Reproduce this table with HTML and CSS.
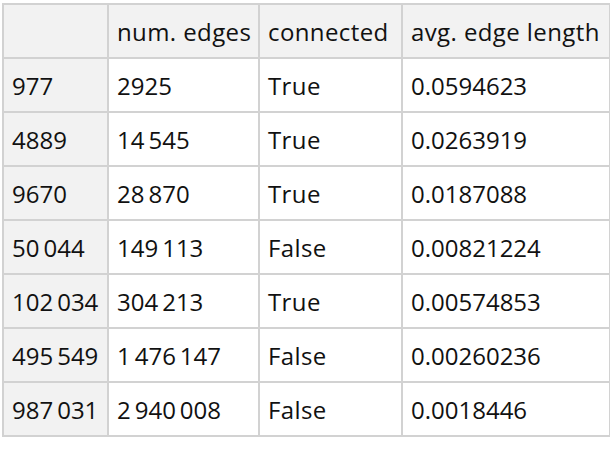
FILE: index.html
```html
<!DOCTYPE html>
<html>
<head>
<meta charset="utf-8">
<link rel="stylesheet" href="styles.css">
</head>
<body>
<table class="grid">
  <colgroup>
    <col class="c1"><col class="c2"><col class="c3"><col class="c4">
  </colgroup>
  <tr class="head"><th></th><th class="word">num. edges</th><th class="word">connected</th><th class="word">avg. edge length</th></tr>
  <tr><th>977</th><td>2925</td><td class="word">True</td><td>0.0594623</td></tr>
  <tr><th>4889</th><td>14&#8201;545</td><td class="word">True</td><td>0.0263919</td></tr>
  <tr><th>9670</th><td>28&#8201;870</td><td class="word">True</td><td>0.0187088</td></tr>
  <tr><th>50&#8201;044</th><td>149&#8201;113</td><td class="word">False</td><td>0.00821224</td></tr>
  <tr><th>102&#8201;034</th><td>304&#8201;213</td><td class="word">True</td><td>0.00574853</td></tr>
  <tr><th>495&#8201;549</th><td>1&#8201;476&#8201;147</td><td class="word">False</td><td>0.00260236</td></tr>
  <tr><th>987&#8201;031</th><td>2&#8201;940&#8201;008</td><td class="word">False</td><td>0.0018446</td></tr>
</table>
</body>
</html>
```

FILE: styles.css
```css
html, body {
  margin: 0;
  padding: 0;
  background: #ffffff;
}
body {
  padding: 3px 0 0 2px;
  font-family: "Open Sans", "Liberation Sans", sans-serif;
  color: #111111;
}
.grid {
  border-collapse: collapse;
  table-layout: fixed;
  width: 607px;
  font-size: 24px;
}
.c1 { width: 105px; }
.c2 { width: 151px; }
.c3 { width: 143px; }
.c4 { width: 208px; }
.grid th, .grid td {
  border: 2px solid #d2d2d2;
  height: 52px;
  padding: 0 0 0 8px;
  text-align: left;
  font-weight: normal;
  white-space: nowrap;
  vertical-align: middle;
  letter-spacing: 0;
}
.grid th {
  background: #f2f2f2;
}
.grid .word {
  letter-spacing: 0.4px;
}
```
